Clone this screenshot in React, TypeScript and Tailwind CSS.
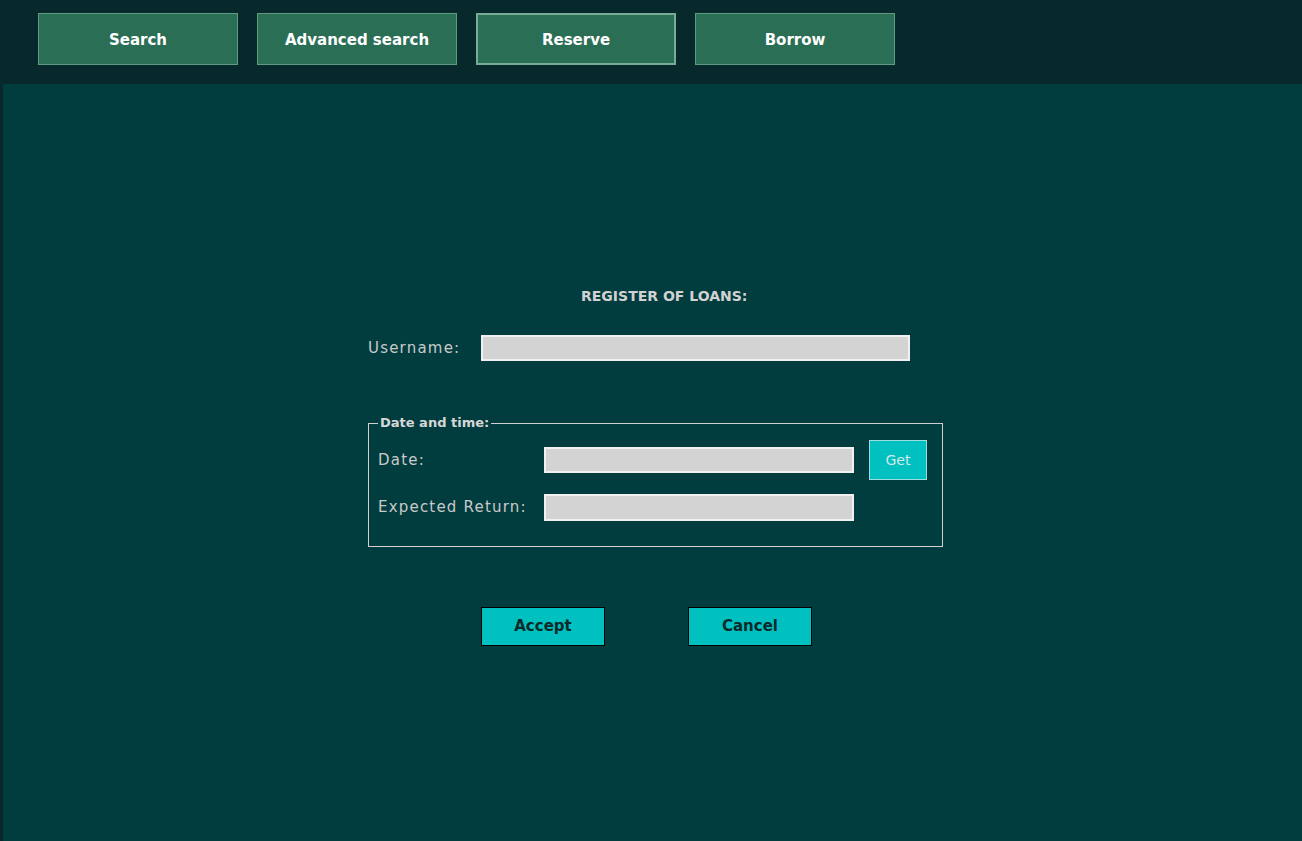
import React from 'react';

const navItems = ['Search', 'Advanced search', 'Reserve', 'Borrow'];

const font = { fontFamily: '"DejaVu Sans", "Liberation Sans", sans-serif' };

export default function App() {
    return (
        <div className="h-[841px] flex flex-col bg-[#013d3f] overflow-hidden" style={font}>
            <header className="h-[84px] shrink-0 bg-[#08292b] flex items-start gap-[19px] pl-[38px] pt-[13px]">
                {navItems.map((item) => (
                    <button
                        key={item}
                        className={
                            item === 'Reserve'
                                ? 'w-[200px] h-[52px] pt-[3px] bg-[#2a6e55] border-2 border-[#79ac98] text-white text-[15px] font-bold'
                                : 'w-[200px] h-[52px] pt-[3px] bg-[#2a6e55] border border-[#5f9a83] text-white text-[15px] font-bold'
                        }
                    >
                        {item}
                    </button>
                ))}
            </header>

            <main className="flex-1 border-l-[3px] border-[#08292b]">
                <div className="ml-[365px] w-[575px] pt-[203px]">
                    <h1 className="pl-[213px] text-[14px] font-bold text-[#d2d2d2] leading-[18px]">
                        REGISTER OF LOANS:
                    </h1>

                    {/* username */}
                    <div className="flex items-center mt-[30px]">
                        <label className="w-[113px] text-[15px] tracking-[1.2px] text-[#c9c9c9]">Username:</label>
                        <div className="w-[429px] h-[26px] bg-[#d3d3d3] border-2 border-[#f0f0f0]" />
                    </div>

                    {/* date and time group */}
                    <fieldset className="mt-[54px] border border-[#d0d0d0] px-[9px] pb-[25px] pt-[0px]">
                        <legend className="px-[2px] text-[13px] font-bold text-[#d7d7d7] leading-[16px]">
                            Date and time:
                        </legend>
                        <div className="flex items-center h-[40px] mt-[9px]">
                            <label className="w-[166px] text-[15px] tracking-[1.2px] text-[#c9c9c9]">Date:</label>
                            <div className="w-[310px] h-[26px] bg-[#d3d3d3] border-2 border-[#f0f0f0]" />
                            <button className="ml-[15px] w-[58px] h-[40px] bg-[#00c0c0] border border-[#9fdede] text-[#d9e9e9] text-[14px]">
                                Get
                            </button>
                        </div>
                        <div className="flex items-center mt-[14px]">
                            <label className="w-[166px] text-[15px] tracking-[1.2px] text-[#c9c9c9]">Expected Return:</label>
                            <div className="w-[310px] h-[27px] bg-[#d3d3d3] border-2 border-[#f0f0f0]" />
                        </div>
                    </fieldset>

                    {/* actions */}
                    <div className="flex gap-[83px] pl-[113px] mt-[60px]">
                        <button className="w-[124px] h-[39px] bg-[#00c0c0] border border-black text-[15px] font-bold text-[#0c2a2a]">
                            Accept
                        </button>
                        <button className="w-[124px] h-[39px] bg-[#00c0c0] border border-black text-[15px] font-bold text-[#0c2a2a]">
                            Cancel
                        </button>
                    </div>
                </div>
            </main>
        </div>
    );
}
